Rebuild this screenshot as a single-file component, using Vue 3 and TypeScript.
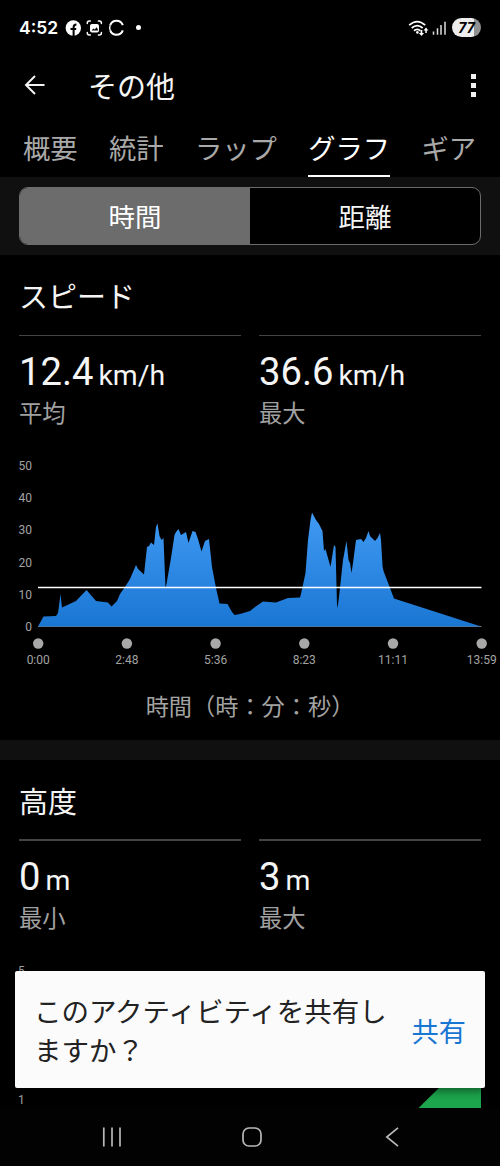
<template>
  <div class="screen">
    <header class="status-bar">
      <span class="clock">4:52</span>
      <svg class="status-icons" width="72" height="18" viewBox="0 0 72 18">
        <circle cx="8.3" cy="9" r="7.7" fill="#fff" />
        <path d="M8.6 17V8.3q0-2.8 2.8-2.8M5.5 10h5.7" fill="none" stroke="#000" stroke-width="2" />
        <g fill="none" stroke="#fff" stroke-width="1.5" stroke-linecap="round">
          <path d="M22.3 4.5V4q0-2 2-2h1M33.4 2h1q2 0 2 2v.5M36.4 13.5v.5q0 2-2 2h-1M25.3 16h-1q-2 0-2-2v-.5" />
        </g>
        <rect x="25" y="5" width="9" height="8.6" rx="2" fill="#fff" />
        <path d="M26.5 11.5l2-2 1.2 1 2-2.2 1.6 3.2z" fill="#000" />
        <path d="M45.2 6.2a6.7 6.7 0 0 1 12.6 0M45.2 11.3a6.7 6.7 0 0 0 12.6 0" fill="none" stroke="#fff" stroke-width="2.1" />
        <path d="M45.2 6.2a6.7 6.7 0 0 0 0 5.1" fill="none" stroke="#fff" stroke-width="1.4" />
      </svg>
      <span class="more-dot"></span>
      <svg class="signal" width="40" height="18" viewBox="0 0 40 18">
        <g fill="none" stroke="#fff" stroke-width="1.8">
          <path d="M1.2 6.2q8-7.2 16 0" />
          <path d="M3.7 9q5.5-4.8 11 0" />
          <path d="M6 11.7q3.2-2.6 6.4 0" />
        </g>
        <circle cx="9.4" cy="13.4" r="1.3" fill="#fff" />
        <path d="M12.6 11v3h-1.8l2.7 3 2.6-3h-1.8v-3zM17.3 14v-2.5h-1.8l2.5-2.9 2.4 2.9h-1.6V14z" fill="#fff" />
        <path d="M25.5 15.8v-3.3M29.5 15.8V9.3M33 15.8V6M37 15.8V2.8" stroke="#ddd" stroke-width="1.5" />
      </svg>
      <span class="battery">77</span>
    </header>

    <div class="app-bar">
      <svg class="back" width="22" height="20" viewBox="0 0 22 20">
        <path d="M11 1L2 10l9 9M2 10h18.5" fill="none" stroke="#f2f2f2" stroke-width="2" />
      </svg>
      <h1>その他</h1>
      <span class="menu"><i></i><i></i><i></i></span>
    </div>

    <nav class="tabs">
      <button
        v-for="tab in tabs"
        :key="tab"
        class="tab"
        :class="{ active: tab === activeTab }"
        @click="activeTab = tab"
      >{{ tab }}</button>
    </nav>

    <div class="segment-band">
      <div class="segments">
        <button
          v-for="mode in modes"
          :key="mode"
          :class="{ active: mode === activeMode }"
          @click="activeMode = mode"
        >{{ mode }}</button>
      </div>
    </div>

    <section class="speed">
      <h2>スピード</h2>
      <div class="stats">
        <div v-for="stat in speedStats" :key="stat.label" class="stat">
          <div class="value">{{ stat.value }}<small>{{ stat.unit }}</small></div>
          <div class="label">{{ stat.label }}</div>
        </div>
      </div>
      <svg class="chart" width="500" height="225" viewBox="0 0 500 225">
        <defs>
          <linearGradient id="speedFill" gradientUnits="userSpaceOnUse" x1="0" y1="62" x2="0" y2="177">
            <stop offset="0" stop-color="#419bf5" />
            <stop offset="1" stop-color="#1976d2" />
          </linearGradient>
        </defs>
        <text v-for="n in yTicks" :key="n" class="tick" x="32" :y="181 - n * 3.22" text-anchor="end">{{ n }}</text>
        <path d="M38 176.5h443.5" stroke="#777" />
        <polygon :points="speedPoints" fill="url(#speedFill)" />
        <path d="M38 137.5h443.5" stroke="#fff" stroke-width="1.7" />
        <g v-for="(time, i) in xTicks" :key="time">
          <circle :cx="38.2 + i * 88.7" cy="193.5" r="5.2" fill="#a8a8a8" />
          <text class="tick" :x="38.2 + i * 88.7" y="214" text-anchor="middle">{{ time }}</text>
        </g>
      </svg>
      <p class="axis-title">時間（時：分：秒）</p>
    </section>

    <section class="elevation">
      <h2>高度</h2>
      <div class="stats">
        <div v-for="stat in elevationStats" :key="stat.label" class="stat">
          <div class="value">{{ stat.value }}<small>{{ stat.unit }}</small></div>
          <div class="label">{{ stat.label }}</div>
        </div>
      </div>
      <svg class="chart" width="500" height="153" viewBox="0 0 500 153">
        <text class="tick" x="18" y="20">5</text>
        <text class="tick" x="18" y="149">1</text>
        <path d="M418.5 153L447 125h34v28z" fill="#1ca54c" />
      </svg>
    </section>

    <div class="snackbar">
      <p>このアクティビティを共有しますか？</p>
      <button>共有</button>
    </div>

    <footer class="system-nav">
      <svg width="20" height="20" viewBox="0 0 20 20">
        <path d="M1.8 .5v19M10 .5v19M18 .5v19" />
      </svg>
      <svg width="20" height="20" viewBox="0 0 20 20">
        <rect x="1" y="1" width="18" height="18" rx="6" />
      </svg>
      <svg width="20" height="20" viewBox="0 0 20 20">
        <path d="M16 .8L4.8 10 16 19.2" />
      </svg>
    </footer>
  </div>
</template>

<script setup lang="ts">
import { ref } from 'vue'

interface Stat {
  value: string
  unit: string
  label: string
}

const tabs = ['概要', '統計', 'ラップ', 'グラフ', 'ギア']
const activeTab = ref('グラフ')

const modes = ['時間', '距離']
const activeMode = ref('時間')

const speedStats: Stat[] = [
  { value: '12.4', unit: 'km/h', label: '平均' },
  { value: '36.6', unit: 'km/h', label: '最大' }
]

const elevationStats: Stat[] = [
  { value: '0', unit: 'm', label: '最小' },
  { value: '3', unit: 'm', label: '最大' }
]

const yTicks = [50, 40, 30, 20, 10, 0]
const xTicks = ['0:00', '2:48', '5:36', '8:23', '11:11', '13:59']

const speedPoints = [
  '38,176.5 43.5,166.5 56,166 58,163 60.5,144 62,157.5 76,151 86.5,140 96,151 108,152.5 111.5,156.5',
  '117,151 120,144 125,137 130,129 133,122 136,115 138,119 144,124.5 147,97 149,96 151,92.5 154,95',
  '156,77 157.5,73.5 159.5,86 161.5,90 163.5,88 165.5,138 166.5,134 171,108 174.5,85 176,82 178.5,79',
  '181,85 186,82 188.5,93 192.5,81 195.5,82 198,89 201.5,101.5 205,91 209,89 212,117 216,138',
  '219.5,153.5 227.5,154 232,162 234.5,165 240,164 250,161 255,157 263,151.5 276,152.5 288,148',
  '300,147.5 301,144 305.5,123 308,90 310.5,70 312,62.5 316,70 319,74 322.5,81 324,101 325.5,99',
  '330.5,117 334,95 335.5,97 337,155 337.5,158 339,147 343,110 346.5,91 348.5,110 350,113 351.5,123',
  '353,113 356,90 361,89 363.5,92 366,88 368.5,81 370,86 375,91 377.5,88 380,83 381,90 382.5,116',
  '383.5,121 390,138 394,148.5 481,176.5'
].join(' ')
</script>

<style>
body {
  margin: 0;
  background: #000;
}
</style>

<style scoped>
.screen {
  position: relative;
  width: 500px;
  height: 1166px;
  overflow: hidden;
  display: flex;
  flex-direction: column;
  background: #000;
  color: #f5f5f5;
  font-family: Roboto, "Noto Sans CJK JP", sans-serif;
  font-weight: 400;
}

.screen > * {
  flex-shrink: 0;
  box-sizing: border-box;
}

button {
  padding: 0;
  border: 0;
  background: none;
  color: inherit;
  font: inherit;
}

h1,
h2,
p {
  margin: 0;
  font-weight: 400;
}

.status-bar {
  height: 55px;
  padding: 0 19px;
  display: flex;
  align-items: center;
}

.clock {
  width: 46px;
  font: 600 17.5px/20px Inter, sans-serif;
  color: #fff;
}

.more-dot {
  width: 5px;
  height: 5px;
  border-radius: 50%;
  background: #fff;
  margin-left: -1px;
}

.signal {
  margin-left: auto;
}

.battery {
  width: 29px;
  height: 19px;
  margin: 0 0 0 4px;
  border-radius: 10px;
  background: linear-gradient(90deg, #eee 77%, #919191 77%);
  color: #000;
  text-align: center;
  font: italic 700 14px/19px Inter, sans-serif;
}

.app-bar {
  height: 65px;
  padding: 0 24px 5px 24px;
  display: flex;
  align-items: center;
}

.app-bar h1 {
  margin-left: 42px;
  padding-top: 6px;
  font-size: 29px;
  line-height: 40px;
}

.menu {
  margin-left: auto;
  display: flex;
  flex-direction: column;
  gap: 4px;
}

.menu i {
  width: 5px;
  height: 5px;
  background: #f2f2f2;
}

.tabs {
  height: 57px;
  padding: 0 24px 0 23px;
  display: flex;
  justify-content: space-between;
}

.tab {
  height: 57px;
  padding-top: 3px;
  border-bottom: 2px solid transparent;
  color: #a9a9a9;
  font-size: 27.3px;
  line-height: 54px;
}

.tab.active {
  color: #fff;
  border-color: #fff;
}

.segment-band {
  height: 78px;
  padding: 10px 19px;
  background: #101010;
}

.segments {
  height: 58px;
  box-sizing: border-box;
  display: flex;
  overflow: hidden;
  border: 1px solid #6c6c6c;
  border-radius: 9px;
  background: #000;
}

.segments button {
  flex: 1;
  padding-top: 2px;
  font-size: 26.5px;
  line-height: 56px;
}

.segments .active {
  background: #6c6c6c;
  color: #fff;
}

.speed {
  height: 485px;
  padding-top: 20px;
}

.elevation {
  height: 368px;
  padding-top: 20px;
  border-top: 20px solid #101010;
  overflow: hidden;
}

h2 {
  height: 60px;
  margin-left: 19px;
  font-size: 29px;
  line-height: 46px;
}

.stats {
  height: 115px;
  margin: 0 19px;
  display: grid;
  grid-template-columns: 1fr 1fr;
  gap: 18px;
}

.stat {
  border-top: 1px solid #444;
}

.elevation .stat {
  border-top-width: 2px;
  margin-top: -1px;
}

.value {
  height: 60px;
  line-height: 72px;
  font-size: 38.2px;
  white-space: nowrap;
}

.value small {
  margin-left: 5px;
  font-size: 28.4px;
}

.label {
  color: #a0a0a0;
  font-size: 23.3px;
  line-height: 37px;
}

.chart {
  display: block;
}

.tick {
  fill: #a3a3a3;
  font-size: 12px;
}

.axis-title {
  color: #a3a3a3;
  text-align: center;
  font-size: 23.2px;
  line-height: 64px;
}

.snackbar {
  position: absolute;
  left: 15px;
  top: 971px;
  width: 470px;
  height: 117px;
  padding: 0 19px;
  display: flex;
  align-items: center;
  justify-content: space-between;
  border-radius: 2px;
  background: #fbfbfb;
  box-shadow: 0 3px 8px rgba(0, 0, 0, 0.45);
  color: #222;
}

.snackbar p {
  width: 360px;
  padding-top: 5px;
  font-size: 27.5px;
  line-height: 39px;
}

.snackbar button {
  color: #1976d2;
  font-size: 27.2px;
}

.system-nav {
  height: 58px;
  padding: 0 98px 0 102px;
  display: flex;
  align-items: center;
  justify-content: space-between;
  background: #020202;
}

.system-nav svg {
  fill: none;
  stroke: #b8b8b8;
  stroke-width: 1.7;
}
</style>
